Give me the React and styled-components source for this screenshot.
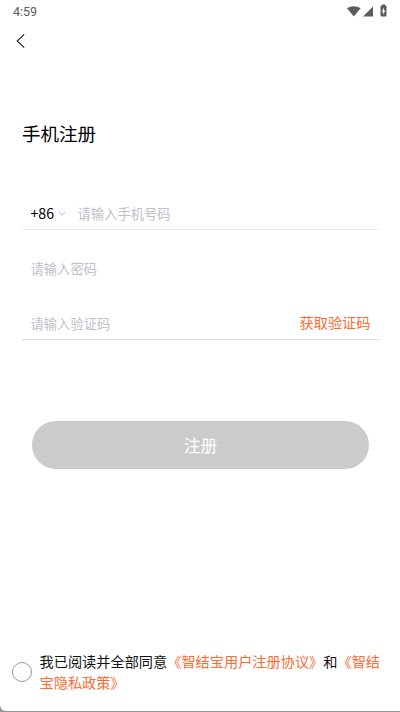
import React from "react";
import styled, { createGlobalStyle } from "styled-components";

const GlobalStyle = createGlobalStyle`
  * { box-sizing: border-box; }
  body { margin: 0; background: #959595; overflow: hidden; }
`;

const Screen = styled.main`
  display: flex;
  flex-direction: column;
  width: 400px;
  height: 711px;
  background: #fff;
  border-bottom-left-radius: 6px;
  color: #111;
  font-family: "Noto Sans CJK SC", sans-serif;
`;

const StatusBar = styled.header`
  display: flex;
  align-items: center;
  justify-content: space-between;
  height: 22px;
  padding: 0 12px 0 13px;
  color: #5c5c5c;
  font: 12.5px/22px Roboto, sans-serif;
`;

const Clock = styled.span`
  padding-top: 1px;
`;

const StatusIcons = styled.svg`
  display: block;
  width: 42px;
  height: 14px;
`;

const NavBar = styled.nav`
  display: flex;
  align-items: center;
  height: 38px;
  padding-left: 15px;
`;

const BackButton = styled.button`
  display: flex;
  padding: 0;
  border: 0;
  background: none;
`;

const Title = styled.h1`
  margin: 58px 0 0 22px;
  font-size: 18.5px;
  font-weight: 400;
  line-height: 30px;
  color: #000;
`;

const Form = styled.form`
  display: flex;
  flex-direction: column;
  margin: 50px 21.5px 0 22px;
`;

const Field = styled.div`
  display: flex;
  align-items: center;
  height: ${(p) => (p.$underlined ? "32px" : "31px")};
  margin-bottom: ${(p) => p.$gap || 0}px;
  padding: 0 8px 0 8.5px;
  border-bottom: ${(p) => (p.$underlined ? `1px solid ${p.$line || "#ebebeb"}` : "0")};
`;

const CountryCode = styled.button`
  display: flex;
  align-items: center;
  gap: 4px;
  width: 47px;
  flex: none;
  padding: 0;
  border: 0;
  background: none;
  color: #000;
  font: 14.2px/28px "Noto Sans CJK SC", sans-serif;
`;

const DialCode = styled.span`
  padding-bottom: 1px;
`;

const Input = styled.input`
  flex: 1;
  min-width: 0;
  height: 30px;
  padding: 0 0 1px;
  border: 0;
  outline: 0;
  background: none;
  color: #111;
  font: 13.3px/29px "Noto Sans CJK SC", sans-serif;
  &::placeholder { color: #bfc1c9; opacity: 1; }
`;

const CodeButton = styled.button`
  flex: none;
  padding: 0 0 3px;
  border: 0;
  background: none;
  color: #ff6a33;
  font: 14.2px/27px "Noto Sans CJK SC", sans-serif;
`;

const SubmitButton = styled.button`
  height: 48px;
  margin: 81.4px 10px 0 10.4px;
  padding: 0;
  border: 0;
  border-radius: 24px;
  background: #cbcbcb;
  color: #fff;
  font: 16.8px/48px "Noto Sans CJK SC", sans-serif;
`;

const Agreement = styled.label`
  display: flex;
  align-items: center;
  gap: 7.5px;
  margin: auto 12px 18px 12px;
`;

const Radio = styled.span`
  flex: none;
  width: 20px;
  height: 20px;
  border: 1px solid #999;
  border-radius: 50%;
`;

const AgreementText = styled.p`
  margin: 0;
  font-size: 14.2px;
  line-height: 21px;
  color: #111;
  word-break: break-all;
`;

const Link = styled.span`
  color: #ff6a33;
`;

export default function App() {
  return (
    <>
      <GlobalStyle />
      <Screen>
        <StatusBar>
          <Clock>4:59</Clock>
          <StatusIcons viewBox="0 0 42 14" fill="#5c5c5c">
            <path d="M1 4.3C4.8 1.4 10.8 1.4 14.6 4.3L7.8 12.6Z" />
            <path d="M27 2.4V12.6H17Z" />
            <path
              fillRule="evenodd"
              d="M35.3 1.6H36V0.6H39V1.6H39.7Q40.5 1.6 40.5 2.4V11.6Q40.5 12.4 39.7 12.4H35.3Q34.5 12.4 34.5 11.6V2.4Q34.5 1.6 35.3 1.6ZM38 3.6L35.7 7.7H37.1V10.8L39.4 6.6H38Z"
            />
          </StatusIcons>
        </StatusBar>
        <NavBar>
          <BackButton aria-label="返回">
            <svg width="11" height="16" viewBox="0 0 11 16" fill="none" stroke="#222" strokeWidth="1.15">
              <path d="M9.2 1.3L2.2 8L9.2 14.7" />
            </svg>
          </BackButton>
        </NavBar>
        <Title>手机注册</Title>
        <Form onSubmit={(e) => e.preventDefault()}>
          <Field $underlined $gap={23}>
            <CountryCode type="button">
              <DialCode>+86</DialCode>
              <svg width="8" height="6" viewBox="0 0 8 6" fill="none" stroke="#b5b5b5" strokeWidth="1">
                <path d="M0.8 1L4 4.2L7.2 1" />
              </svg>
            </CountryCode>
            <Input type="tel" placeholder="请输入手机号码" />
          </Field>
          <Field $gap={24}>
            <Input type="password" placeholder="请输入密码" />
          </Field>
          <Field $underlined $line="#dedede">
            <Input placeholder="请输入验证码" />
            <CodeButton type="button">获取验证码</CodeButton>
          </Field>
          <SubmitButton>注册</SubmitButton>
        </Form>
        <Agreement>
          <Radio />
          <AgreementText>
            我已阅读并全部同意<Link>《智结宝用户注册协议》</Link>和<Link>《智结宝隐私政策》</Link>
          </AgreementText>
        </Agreement>
      </Screen>
    </>
  );
}
